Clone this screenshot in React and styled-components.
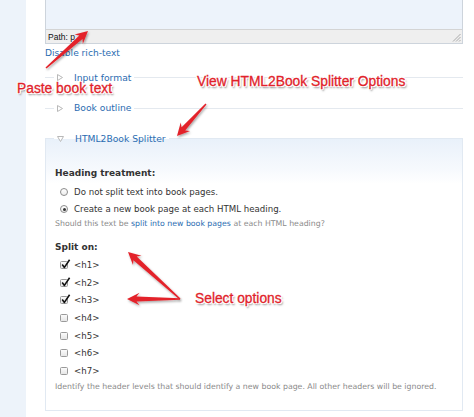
import React from "react";
import styled, { createGlobalStyle } from "styled-components";

const Global = createGlobalStyle`
  html, body { margin: 0; padding: 0; background: #fff; }
  body { overflow: hidden; }
  * { box-sizing: border-box; }
`;

const LINK = "#2b6cb1";

const Page = styled.div`
  position: relative;
  width: 474px;
  height: 417px;
  display: flex;
  overflow: hidden;
  font-family: "DejaVu Sans", Verdana, sans-serif;
`;

const Strip = styled.div`
  width: 26px;
  flex: none;
  background: #edf3fa;
`;

const Main = styled.div`
  flex: 1;
  padding: 0 11px 0 19px;
  display: flex;
  flex-direction: column;
`;

const Editor = styled.div`
  border: 1px solid #cdd4dc;
  border-top: none;
`;

const EditorBody = styled.div`
  height: 29px;
  background: #edf3fb;
`;

const PathBar = styled.div`
  position: relative;
  height: 14px;
  background: #efefef;
  border-top: 1px solid #d4d4d4;
  font-family: "Liberation Sans", Arial, sans-serif;
  font-size: 8.5px;
  color: #111;
  display: flex;
  align-items: center;
  padding-left: 2px;
`;

const Grip = styled.svg`
  position: absolute;
  right: 1px;
  bottom: 1px;
`;

const ToggleLink = styled.a`
  display: block;
  margin-top: 3px;
  line-height: 12px;
  font-size: 9.1px;
  color: ${LINK};
  text-decoration: none;
`;

const Fieldset = styled.fieldset`
  margin: ${(p) => p.$mt}px 0 0;
  padding: 0;
  min-width: 0;
  border: none;
  border-top: 1px solid #e4e9ef;
  ${(p) =>
    p.$open &&
    `
    border: 1px solid #e1e9f2;
    background: linear-gradient(#e9f1fa 0px, #f6f9fd 30px, #ffffff 45px);
  `}
`;

const Legend = styled.legend`
  display: flex;
  align-items: center;
  gap: 11px;
  margin-left: ${(p) => (p.$open ? 8 : 9)}px;
  padding: 0 3px;
  height: 12px;
  line-height: 12px;
  font-size: 9.2px;
  color: ${LINK};
`;

const Body = styled.div`
  padding: 22.5px 0 17.5px 9px;
  display: flex;
  flex-direction: column;
`;

const Heading = styled.div`
  line-height: 12px;
  font-size: 9px;
  font-weight: bold;
  color: #333;
  margin-top: ${(p) => p.$mt || 0}px;
`;

const Options = styled.div`
  margin-top: ${(p) => p.$mt}px;
  display: flex;
  flex-direction: column;
`;

const Row = styled.label`
  height: ${(p) => p.$h}px;
  display: flex;
  align-items: center;
  gap: 6px;
  padding-left: 5px;
  font-size: 8.65px;
  color: #333;
`;

const Radio = styled.span`
  position: relative;
  width: 8px;
  height: 8px;
  border-radius: 50%;
  border: 1px solid #8c8c8c;
  background: linear-gradient(#ffffff, #ececec);
  flex: none;
  ${(p) =>
    p.$on &&
    `
    &::after {
      content: "";
      position: absolute;
      left: 1.5px; top: 1.5px;
      width: 3px; height: 3px;
      border-radius: 50%;
      background: #333;
    }
  `}
`;

const Box = styled.span`
  position: relative;
  width: 8px;
  height: 8px;
  border-radius: 1.5px;
  border: 1px solid #9a9a9a;
  background: linear-gradient(#fbfbfb, #e6e6e6);
  flex: none;
`;

const Tick = styled.svg`
  position: absolute;
  left: 0px;
  top: -3px;
`;

const Desc = styled.div`
  margin-top: ${(p) => p.$mt}px;
  line-height: 10px;
  font-size: 7.8px;
  color: #8a8a8a;
  white-space: nowrap;
`;

const DescLink = styled.a`
  color: ${LINK};
  text-decoration: none;
`;

const Overlay = styled.div`
  position: absolute;
  inset: 0;
  pointer-events: none;
`;

const Arrows = styled.svg`
  position: absolute;
  left: 0;
  top: 0;
`;

const Note = styled.div`
  position: absolute;
  left: ${(p) => p.$x}px;
  top: ${(p) => p.$y}px;
  line-height: 16px;
  font-family: "Liberation Sans", Arial, sans-serif;
  font-size: 13.8px;
  color: #e1222a;
  white-space: nowrap;
  -webkit-text-stroke: 0.3px #e1222a;
  text-shadow:
    1.3px 0 0 #fff, -1.3px 0 0 #fff, 0 1.3px 0 #fff, 0 -1.3px 0 #fff,
    1px 1px 0 #fff, -1px -1px 0 #fff, 1px -1px 0 #fff, -1px 1px 0 #fff,
    1.5px 2px 2px rgba(0, 0, 0, 0.5);
`;

function Triangle({ open }) {
  return open ? (
    <svg width="7" height="6" viewBox="0 0 7 6">
      <path d="M0.5 0.5 H6.5 L3.5 5.5 Z" fill="#fff" stroke="#b8b8b8" strokeWidth="1" />
    </svg>
  ) : (
    <svg width="6" height="7" viewBox="0 0 6 7">
      <path d="M0.5 0.5 V6.5 L5.5 3.5 Z" fill="#fff" stroke="#b8b8b8" strokeWidth="1" />
    </svg>
  );
}

function arrowPoints(x1, y1, x2, y2) {
  const dx = x2 - x1;
  const dy = y2 - y1;
  const L = Math.hypot(dx, dy);
  const ux = dx / L;
  const uy = dy / L;
  const px = -uy;
  const py = ux;
  const head = 12.5;
  const hw = 6.3;
  const s0 = 0.7;
  const s1 = 2.4;
  const bx = x2 - ux * head;
  const by = y2 - uy * head;
  const nx = x2 - ux * (head - 3);
  const ny = y2 - uy * (head - 3);
  const pts = [
    [x1 + px * s0, y1 + py * s0],
    [nx + px * s1, ny + py * s1],
    [bx + px * hw, by + py * hw],
    [x2, y2],
    [bx - px * hw, by - py * hw],
    [nx - px * s1, ny - py * s1],
    [x1 - px * s0, y1 - py * s0],
  ];
  return pts.map((p) => p.map((v) => v.toFixed(1)).join(",")).join(" ");
}

const ARROWS = [
  [46, 68, 88, 31],
  [206, 104, 177, 136],
  [180, 299, 128, 252],
  [180, 299, 127, 299],
];

function Checkbox({ on }) {
  return (
    <Box>
      {on && (
        <Tick width="10" height="10" viewBox="0 0 10 10">
          <path d="M1.2 5.6 L3.4 8.4 L8.6 0.8" fill="none" stroke="#111" strokeWidth="1.6" strokeLinejoin="round" />
        </Tick>
      )}
    </Box>
  );
}

const LEVELS = [
  ["<h1>", true],
  ["<h2>", true],
  ["<h3>", true],
  ["<h4>", false],
  ["<h5>", false],
  ["<h6>", false],
  ["<h7>", false],
];

export default function App() {
  return (
    <>
      <Global />
      <Page>
        <Strip />
        <Main>
          <Editor>
            <EditorBody />
            <PathBar>
              Path: p
              <Grip width="9" height="9" viewBox="0 0 9 9">
                <path d="M8.5 1 L1 8.5 M8.5 4 L4 8.5 M8.5 7 L7 8.5" stroke="#999" strokeWidth="0.8" />
              </Grip>
            </PathBar>
          </Editor>
          <ToggleLink href="#">Disable rich-text</ToggleLink>

          <Fieldset $mt={12.5}>
            <Legend>
              <Triangle />
              Input format
            </Legend>
          </Fieldset>

          <Fieldset $mt={18.5}>
            <Legend>
              <Triangle />
              Book outline
            </Legend>
          </Fieldset>

          <Fieldset $mt={18.5} $open>
            <Legend $open>
              <Triangle open />
              HTML2Book Splitter
            </Legend>
            <Body>
              <Heading>Heading treatment:</Heading>
              <Options $mt={4.5}>
                <Row $h={17}>
                  <Radio />
                  Do not split text into book pages.
                </Row>
                <Row $h={17}>
                  <Radio $on />
                  Create a new book page at each HTML heading.
                </Row>
              </Options>
              <Desc $mt={1.5}>
                Should this text be <DescLink href="#">split into new book pages</DescLink> at each HTML heading?
              </Desc>

              <Heading $mt={12}>Split on:</Heading>
              <Options $mt={3.2}>
                {LEVELS.map(([label, on]) => (
                  <Row key={label} $h={17.67}>
                    <Checkbox on={on} />
                    {label}
                  </Row>
                ))}
              </Options>
              <Desc $mt={2.6}>
                Identify the header levels that should identify a new book page. All other headers will be ignored.
              </Desc>
            </Body>
          </Fieldset>
        </Main>

        <Overlay>
          <Arrows width="474" height="417" viewBox="0 0 474 417">
            <defs>
              <filter id="sh" x="-20%" y="-20%" width="140%" height="140%">
                <feDropShadow dx="1" dy="1.5" stdDeviation="1" floodColor="#000" floodOpacity="0.35" />
              </filter>
            </defs>
            {ARROWS.map((a, i) => (
              <polygon key={i} points={arrowPoints(...a)} fill="#e3232b" filter="url(#sh)" />
            ))}
          </Arrows>
          <Note $x={17} $y={81}>Paste book text</Note>
          <Note $x={197} $y={74}>View HTML2Book Splitter Options</Note>
          <Note $x={195} $y={291}>Select options</Note>
        </Overlay>
      </Page>
    </>
  );
}
